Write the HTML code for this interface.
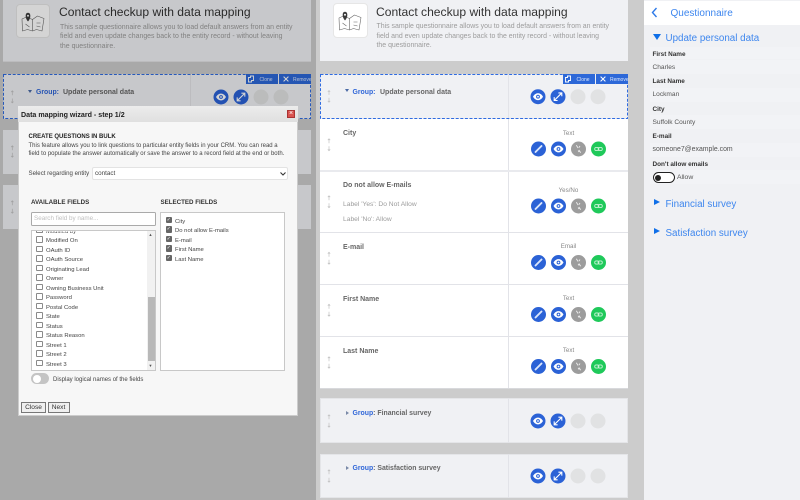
<!DOCTYPE html>
<html><head><meta charset="utf-8">
<style>
html,body{margin:0;padding:0}
body{width:800px;height:500px;position:relative;overflow:hidden;background:#ccc;font-family:"Liberation Sans",sans-serif;color:#666}
.b{position:absolute;box-sizing:border-box}
.t{position:absolute;white-space:nowrap;line-height:10px;height:10px;font-size:6.7px}
.card{background:#f0f1f4}
.w{background:#fff}
.q{font-weight:bold;font-size:7px;color:#666;margin-top:1px}
.g{font-weight:bold;font-size:6.9px;color:#2f66d8;margin-top:1px}
.h{font-size:12.1px;color:#333;line-height:16px;height:16px}
.d{font-size:6.95px;color:#9c9c9c;margin-top:.5px}
.ty{font-size:6.2px;color:#888;width:40px;text-align:center;margin-top:.5px}
svg{position:absolute;left:0;top:0}
.lb{font-size:6.4px;font-weight:bold;color:#333}
.v{font-size:6.6px;color:#555}
.band{background:#f2f3f6;left:650px;width:150px;height:14px}
.s{font-size:9.8px;color:#3d86ee;line-height:14px;height:14px;margin-top:1.3px}
.i{font-size:5.9px;color:#444;margin-top:1px}
.cb{position:absolute;left:36px;width:6.5px;height:6.5px;background:#fff;border:.7px solid #8a8a8a;border-radius:1px;box-sizing:border-box}
.ck{position:absolute;left:165.5px;width:6.5px;height:6.5px;background:#666;border-radius:1px;color:#fff;font-size:5px;line-height:6.5px;text-align:center}
.btn{position:absolute;top:402px;height:11px;background:#efefef;border:.8px solid #777;box-sizing:border-box;font-size:6.6px;color:#333;text-align:center;line-height:9.5px}
.bt{position:absolute;height:10px;width:32px;top:74px;background:#2d68d8}
.bx{position:absolute;white-space:nowrap;line-height:10px;height:10px;top:74.5px;font-size:5px;color:#dbe6fb}
</style></head>
<body>

<!-- LEFT PANEL -->
<div class="b card" style="left:3px;top:0;width:308px;height:62px;border-bottom:1px solid #e2e3e5"></div>
<div class="b w" style="left:16px;top:4px;width:34px;height:34px;border-radius:4px;border:.6px solid #e6e6e6"></div>
<div class="t h" style="left:59px;top:4px">Contact checkup with data mapping</div>
<div class="t d" style="left:60px;top:22px">This sample questionnaire allows you to load default answers from an entity</div>
<div class="t d" style="left:60px;top:31.5px">field and even update changes back to the entity record - without leaving</div>
<div class="t d" style="left:60px;top:41px">the questionnaire.</div>

<div class="b card" style="left:3px;top:74px;width:308px;height:45px"></div>
<div class="b" style="left:190px;top:75px;width:1px;height:43px;background:#e2e3e6"></div>
<div class="t g" style="left:36px;top:87px">Group:</div>
<div class="t q" style="left:63px;top:87px">Update personal data</div>
<div class="b" style="left:28px;top:89.5px;border-left:2.2px solid transparent;border-right:2.2px solid transparent;border-top:3px solid #4a6aa5"></div>

<div class="b card" style="left:3px;top:130px;width:308px;height:44px"></div>
<div class="b card" style="left:3px;top:185px;width:308px;height:44px"></div>

<!-- MIDDLE PANEL -->
<div class="b card" style="left:320px;top:0;width:308px;height:61px"></div>
<div class="b w" style="left:333px;top:3px;width:35px;height:35px;border-radius:4px;border:.6px solid #e6e6e6"></div>
<div class="t h" style="left:376px;top:3.5px">Contact checkup with data mapping</div>
<div class="t d" style="left:376.5px;top:21px">This sample questionnaire allows you to load default answers from an entity</div>
<div class="t d" style="left:376.5px;top:31px">field and even update changes back to the entity record - without leaving</div>
<div class="t d" style="left:376.5px;top:40.5px">the questionnaire.</div>

<div class="b w" style="left:320px;top:118px;width:308px;height:270px"></div>
<div class="b card" style="left:320px;top:74px;width:308px;height:45px"></div>
<div class="b" style="left:508px;top:74px;width:1px;height:314px;background:#e2e3e8"></div>
<div class="b" style="left:320px;top:170px;width:308px;height:2px;background:#e9eaee"></div>
<div class="b" style="left:320px;top:232px;width:308px;height:1px;background:#e2e3e8"></div>
<div class="b" style="left:320px;top:284px;width:308px;height:1px;background:#e2e3e8"></div>
<div class="b" style="left:320px;top:336px;width:308px;height:1px;background:#e2e3e8"></div>
<div class="b" style="left:320px;top:388px;width:308px;height:1px;background:#d8d9dc"></div>

<svg width="800" height="500" viewBox="0 0 800 500">
<rect x="3.5" y="74.5" width="307" height="44" fill="none" stroke="#2f6be0" stroke-width="1" stroke-dasharray="3 1.6"/>
<rect x="320.5" y="74.5" width="307" height="44" fill="none" stroke="#2f6be0" stroke-width="1" stroke-dasharray="3 1.6"/>
</svg>

<div class="bt" style="left:246px"></div><div class="bt" style="left:279px"></div>
<div class="bx" style="left:259.5px">Clone</div><div class="bx" style="left:293px">Remove</div>
<div class="bt" style="left:563px"></div><div class="bt" style="left:596px"></div>
<div class="bx" style="left:576.5px">Clone</div><div class="bx" style="left:610px">Remove</div>

<div class="t g" style="left:352.5px;top:86.5px">Group:</div>
<div class="t q" style="left:380px;top:86.5px">Update personal data</div>
<div class="b" style="left:345px;top:89px;border-left:2.2px solid transparent;border-right:2.2px solid transparent;border-top:3px solid #4a6aa5"></div>

<div class="t q" style="left:343px;top:128px">City</div>
<div class="t ty" style="left:548.5px;top:128px">Text</div>

<div class="t q" style="left:343px;top:180px">Do not allow E-mails</div>
<div class="t d" style="left:343px;top:199.5px;font-size:6.7px">Label 'Yes': Do Not Allow</div>
<div class="t d" style="left:343px;top:214px;font-size:6.7px">Label 'No': Allow</div>
<div class="t ty" style="left:548.5px;top:185px">Yes/No</div>

<div class="t q" style="left:343px;top:241.5px">E-mail</div>
<div class="t ty" style="left:548.5px;top:241.5px">Email</div>

<div class="t q" style="left:343px;top:293.5px">First Name</div>
<div class="t ty" style="left:548.5px;top:293.5px">Text</div>

<div class="t q" style="left:343px;top:345.5px">Last Name</div>
<div class="t ty" style="left:548.5px;top:345.5px">Text</div>

<div class="b card" style="left:320px;top:398px;width:308px;height:45px;border:.7px solid #e4e5e8"></div>
<div class="b" style="left:508px;top:398px;width:1px;height:45px;background:#e2e3e8"></div>
<div class="t g" style="left:352.5px;top:408px">Group<span style="color:#666">: Financial survey</span></div>
<div class="b" style="left:345.5px;top:411px;border-top:2.2px solid transparent;border-bottom:2.2px solid transparent;border-left:3.2px solid #7a8aa8"></div>

<div class="b card" style="left:320px;top:454px;width:308px;height:44px;border:.7px solid #e4e5e8"></div>
<div class="b" style="left:508px;top:454px;width:1px;height:44px;background:#e2e3e8"></div>
<div class="t g" style="left:352.5px;top:463px">Group<span style="color:#666">: Satisfaction survey</span></div>
<div class="b" style="left:345.5px;top:466px;border-top:2.2px solid transparent;border-bottom:2.2px solid transparent;border-left:3.2px solid #7a8aa8"></div>

<!-- ICONS -->
<svg width="800" height="500" viewBox="0 0 800 500" style="z-index:1">
<defs>
<g id="eye"><circle r="7.5" fill="#2b62d6"/><path d="M-5 0C-3.5-2.6-1.6-3.4 0-3.4S3.5-2.6 5 0C3.5 2.6 1.6 3.4 0 3.4S-3.5 2.6-5 0Z" fill="#fff"/><circle r="1.9" fill="#2b62d6"/><circle r=".9" fill="#fff"/></g>
<g id="exp"><circle r="7.5" fill="#2b62d6"/><path d="M-3.4 3.4L3.4-3.4M.4-3.8H3.8V-.4M-3.8 .4V3.8H-.4" fill="none" stroke="#fff" stroke-width="1.1"/></g>
<g id="pen"><circle r="7.5" fill="#2b62d6"/><path d="M-3 3L3-3" stroke="#dbe6fb" stroke-width="1.9" stroke-linecap="round"/></g>
<g id="unl"><circle r="7.5" fill="#9c9c9c"/><path d="M-2.2-3.8L-.4-1M.4 1L2.2 3.8M1.5-3L.4-1.4M-.4 1.6L.6 3" fill="none" stroke="#eee" stroke-width=".9"/></g>
<g id="lnk"><circle r="7.5" fill="#1fc95a"/><rect x="-3.8" y="-1.6" width="4.2" height="3.2" rx="1.6" fill="none" stroke="#c8f2d6" stroke-width=".9"/><rect x="-.4" y="-1.6" width="4.2" height="3.2" rx="1.6" fill="none" stroke="#c8f2d6" stroke-width=".9"/></g>
<g id="emp"><circle r="7.5" fill="#e1e2e3"/></g>
<g id="au"><path d="M0 2.2V-2.1M-1.2-.9L0-2.2 1.2-.9" fill="none" stroke="#c2c2c2" stroke-width=".7"/></g>
<g id="ad"><path d="M0-2.2V2.1M-1.2 .9L0 2.2 1.2 .9" fill="none" stroke="#c2c2c2" stroke-width=".7"/></g>
<g id="cl"><path d="M-2.5-1.5H-.5V-3H2.5V1.5H.5V3H-2.5Z" fill="none" stroke="#fff" stroke-width=".9"/></g>
<g id="xx"><path d="M-2.4-2.4L2.4 2.4M2.4-2.4L-2.4 2.4" fill="none" stroke="#fff" stroke-width="1"/></g>
<g id="map" fill="none" stroke="#666" stroke-width=".6" stroke-linejoin="round">
<path d="M-11.5-3L-7-5-1-2.5 4-6 10.5-3.5 8.5 9 3 7.5-1 9-6 7.5-11 9Z"/><path d="M-1-2.5V9M-8 2L-4 5M3 1H7M3 4L7 5"/>
<path d="M-5.5-1C-8.2-4-8.2-9-5.5-9S-2.8-4-5.5-1Z" fill="#3a3a3a" stroke="#3a3a3a"/><circle cx="-5.5" cy="-6.3" r="1" fill="#fff" stroke="none"/></g>
</defs>
<use href="#map" x="350.5" y="21"/><use href="#map" x="33.5" y="22"/>
<use href="#cl" x="251" y="79"/><use href="#xx" x="286" y="79"/><use href="#cl" x="568" y="79"/><use href="#xx" x="603" y="79"/>
<use href="#au" x="12.3" y="93"/><use href="#ad" x="12.3" y="100.7"/>
<use href="#au" x="12.3" y="148"/><use href="#ad" x="12.3" y="155"/>
<use href="#au" x="12.3" y="203"/><use href="#ad" x="12.3" y="211"/>
<use href="#au" x="329" y="92.7"/><use href="#ad" x="329" y="100"/>
<use href="#au" x="329" y="141"/><use href="#ad" x="329" y="148.5"/>
<use href="#au" x="329" y="198"/><use href="#ad" x="329" y="205.5"/>
<use href="#au" x="329" y="254.5"/><use href="#ad" x="329" y="262"/>
<use href="#au" x="329" y="306.5"/><use href="#ad" x="329" y="314"/>
<use href="#au" x="329" y="359"/><use href="#ad" x="329" y="366"/>
<use href="#au" x="329" y="417"/><use href="#ad" x="329" y="425"/>
<use href="#au" x="329" y="472"/><use href="#ad" x="329" y="480"/>
<use href="#eye" x="221" y="97"/><use href="#exp" x="241" y="97"/><use href="#emp" x="261" y="97"/><use href="#emp" x="281" y="97"/>
<use href="#eye" x="538" y="96.7"/><use href="#exp" x="558" y="96.7"/><use href="#emp" x="578" y="96.7"/><use href="#emp" x="598" y="96.7"/>
<use href="#pen" x="538.5" y="149"/><use href="#eye" x="558.5" y="149"/><use href="#unl" x="578.5" y="149"/><use href="#lnk" x="598.5" y="149"/>
<use href="#pen" x="538.5" y="206"/><use href="#eye" x="558.5" y="206"/><use href="#unl" x="578.5" y="206"/><use href="#lnk" x="598.5" y="206"/>
<use href="#pen" x="538.5" y="262.5"/><use href="#eye" x="558.5" y="262.5"/><use href="#unl" x="578.5" y="262.5"/><use href="#lnk" x="598.5" y="262.5"/>
<use href="#pen" x="538.5" y="314.5"/><use href="#eye" x="558.5" y="314.5"/><use href="#unl" x="578.5" y="314.5"/><use href="#lnk" x="598.5" y="314.5"/>
<use href="#pen" x="538.5" y="366.5"/><use href="#eye" x="558.5" y="366.5"/><use href="#unl" x="578.5" y="366.5"/><use href="#lnk" x="598.5" y="366.5"/>
<use href="#eye" x="538" y="421"/><use href="#exp" x="558" y="421"/><use href="#emp" x="578" y="421"/><use href="#emp" x="598" y="421"/>
<use href="#eye" x="538" y="476"/><use href="#exp" x="558" y="476"/><use href="#emp" x="578" y="476"/><use href="#emp" x="598" y="476"/>
</svg>

<!-- OVERLAY -->
<div class="b" style="left:0;top:0;width:316px;height:500px;background:rgba(0,0,0,.17);z-index:2"></div>

<!-- DIALOG -->
<div style="position:absolute;left:0;top:0;z-index:3">
<div class="b" style="left:18px;top:106px;width:280px;height:310px;background:#f7f7f7;border:.6px solid #ccc"></div>
<div class="b" style="left:18px;top:106px;width:280px;height:16px;background:linear-gradient(#ececec,#e0e0e0)"></div>
<div class="t" style="left:21px;top:110px;font-size:7.1px;font-weight:bold;color:#222">Data mapping wizard - step 1/2</div>
<div class="b" style="left:287px;top:109.5px;width:8px;height:8px;background:#d9534f;border:.6px solid #a33;color:#fff;font-size:7px;line-height:6.5px;text-align:center">×</div>
<div class="t" style="left:28.5px;top:132px;font-size:6px;font-weight:bold;color:#222">CREATE QUESTIONS IN BULK</div>
<div class="t i" style="left:28.5px;top:139.5px;font-size:6px">This feature allows you to link questions to particular entity fields in your CRM. You can read a</div>
<div class="t i" style="left:28.5px;top:148px;font-size:6px">field to populate the answer automatically or save the answer to a record field at the end or both.</div>
<div class="t i" style="left:28.5px;top:167.5px;font-size:6.1px">Select regarding entity</div>
<div class="b" style="left:91.5px;top:167px;width:196px;height:13px;background:#fff;border:.6px solid #e3e3e3;border-radius:2px"></div>
<div class="t i" style="left:95px;top:168px;font-size:6.3px">contact</div>
<svg width="300" height="200" style="left:278px;top:170px"><path d="M2.5 2.5L5 5 7.5 2.5" fill="none" stroke="#333" stroke-width="1.1"/></svg>
<div class="t" style="left:31px;top:197.5px;font-size:6.2px;font-weight:bold;color:#333">AVAILABLE FIELDS</div>
<div class="t" style="left:160.5px;top:197.5px;font-size:6.2px;font-weight:bold;color:#333">SELECTED FIELDS</div>
<div class="b" style="left:31px;top:212px;width:125px;height:13.5px;background:#fff;border:.7px solid #aaa;border-radius:1.5px"></div>
<div class="t" style="left:34px;top:214px;font-size:6.3px;color:#c0c0c0">Search field by name...</div>

<div class="b" style="left:31px;top:230px;width:125px;height:141px;background:#fff;border:.7px solid #c8c8c8;overflow:hidden"></div>
<div class="b" style="left:147px;top:231px;width:8px;height:139px;background:#f1f1f1"></div>
<div class="b" style="left:147.5px;top:297px;width:7px;height:64px;background:#b8b8b8"></div>
<div class="t" style="left:148.5px;top:230px;font-size:4px;color:#555">▲</div>
<div class="t" style="left:148.5px;top:360.5px;font-size:4px;color:#555">▼</div>

<div class="b" style="left:36px;top:231px;width:6.5px;height:2px;border:.7px solid #8a8a8a;border-top:0;border-radius:0 0 1px 1px"></div>
<div class="t i" style="left:46px;top:226px;clip-path:inset(4.5px 0 0 0)">Modified by</div>
<div class="cb" style="top:236px"></div><div class="t i" style="left:46px;top:235px">Modified On</div>
<div class="cb" style="top:245.5px"></div><div class="t i" style="left:46px;top:244.5px">OAuth ID</div>
<div class="cb" style="top:255px"></div><div class="t i" style="left:46px;top:254px">OAuth Source</div>
<div class="cb" style="top:264.5px"></div><div class="t i" style="left:46px;top:263.5px">Originating Lead</div>
<div class="cb" style="top:274px"></div><div class="t i" style="left:46px;top:273px">Owner</div>
<div class="cb" style="top:283.5px"></div><div class="t i" style="left:46px;top:282.5px">Owning Business Unit</div>
<div class="cb" style="top:293px"></div><div class="t i" style="left:46px;top:292px">Password</div>
<div class="cb" style="top:302.5px"></div><div class="t i" style="left:46px;top:301.5px">Postal Code</div>
<div class="cb" style="top:312px"></div><div class="t i" style="left:46px;top:311px">State</div>
<div class="cb" style="top:321.5px"></div><div class="t i" style="left:46px;top:320.5px">Status</div>
<div class="cb" style="top:331px"></div><div class="t i" style="left:46px;top:330px">Status Reason</div>
<div class="cb" style="top:340.5px"></div><div class="t i" style="left:46px;top:339.5px">Street 1</div>
<div class="cb" style="top:350px"></div><div class="t i" style="left:46px;top:349px">Street 2</div>
<div class="cb" style="top:359.5px"></div><div class="t i" style="left:46px;top:358.5px">Street 3</div>

<div class="b" style="left:160px;top:212px;width:125px;height:159px;background:#fff;border:.7px solid #c8c8c8"></div>
<div class="ck" style="top:216.5px">✓</div><div class="t i" style="left:175px;top:215.5px">City</div>
<div class="ck" style="top:226px">✓</div><div class="t i" style="left:175px;top:225px">Do not allow E-mails</div>
<div class="ck" style="top:235.5px">✓</div><div class="t i" style="left:175px;top:234.5px">E-mail</div>
<div class="ck" style="top:245px">✓</div><div class="t i" style="left:175px;top:244px">First Name</div>
<div class="ck" style="top:254.5px">✓</div><div class="t i" style="left:175px;top:253.5px">Last Name</div>

<div class="b" style="left:31px;top:373px;width:18px;height:11px;border-radius:6px;background:#c4c4c4"></div>
<div class="b" style="left:33px;top:374.5px;width:8px;height:8px;border-radius:50%;background:#fff"></div>
<div class="t i" style="left:53px;top:373.5px;font-size:6px">Display logical names of the fields</div>
<div class="btn" style="left:21px;width:25px">Close</div>
<div class="btn" style="left:47.5px;width:22px">Next</div>
</div>

<!-- RIGHT PANEL -->
<div class="b card" style="left:644px;top:0;width:156px;height:500px"></div>
<div class="b w" style="left:644px;top:1px;width:156px;height:24px"></div>
<svg width="20" height="20" style="left:650px;top:6px"><path d="M6.5 2L2.5 6.5 6.5 11" fill="none" stroke="#2f7be8" stroke-width="1.4"/></svg>
<div class="t" style="left:670.5px;top:7.3px;font-size:10px;line-height:14px;height:14px;color:#3d86ee">Questionnaire</div>
<div class="b" style="left:652.5px;top:34.3px;border-left:4px solid transparent;border-right:4px solid transparent;border-top:6px solid #0f6fe8"></div>
<div class="t s" style="left:665.5px;top:30.5px">Update personal data</div>

<div class="b band" style="top:47px;height:12px"></div><div class="t lb" style="left:652.5px;top:49.5px">First Name</div>
<div class="b band" style="top:60px"></div><div class="t v" style="left:652.5px;top:62.5px">Charles</div>
<div class="t lb" style="left:652.5px;top:77px">Last Name</div>
<div class="b band" style="top:88px"></div><div class="t v" style="left:652.5px;top:90px">Lockman</div>
<div class="t lb" style="left:652.5px;top:104.5px">City</div>
<div class="b band" style="top:115px"></div><div class="t v" style="left:652.5px;top:117.5px">Suffolk County</div>
<div class="t lb" style="left:652.5px;top:132px">E-mail</div>
<div class="b band" style="top:143px"></div><div class="t v" style="left:652.5px;top:145px;font-size:6.9px">someone7@example.com</div>
<div class="t lb" style="left:652.5px;top:159.5px">Don't allow emails</div>
<div class="b band" style="top:170px"></div>
<div class="b" style="left:652.5px;top:172px;width:22px;height:11px;border:1.2px solid #222;border-radius:6px;background:#fff"></div>
<div class="b" style="left:655px;top:174.5px;width:6px;height:6px;border-radius:50%;background:#222"></div>
<div class="t v" style="left:677px;top:172.5px;font-size:6.8px">Allow</div>

<div class="b" style="left:654px;top:199px;border-top:3.5px solid transparent;border-bottom:3.5px solid transparent;border-left:6px solid #0f6fe8"></div>
<div class="t s" style="left:665.5px;top:196.5px">Financial survey</div>
<div class="b" style="left:654px;top:228px;border-top:3.5px solid transparent;border-bottom:3.5px solid transparent;border-left:6px solid #0f6fe8"></div>
<div class="t s" style="left:665.5px;top:225.5px">Satisfaction survey</div>

</body></html>
